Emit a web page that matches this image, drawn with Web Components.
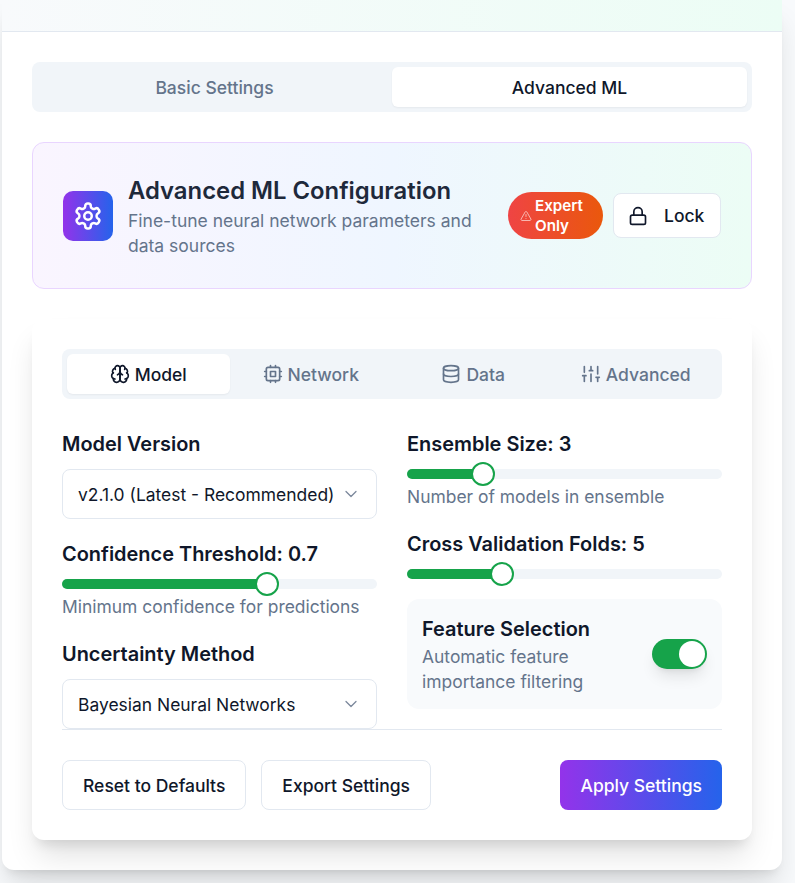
<!DOCTYPE html>
<html lang="en"><head><meta charset="utf-8"><title>Advanced ML</title>
<style>
html,body{margin:0;padding:0;height:883px;overflow:hidden;background:#f8fafc}
body{font-family:Inter,"Liberation Sans",sans-serif;color:#0f172a}
</style></head><body>
<ml-panel>
  <seg-tabs columns="2" height="40" slot="tabs">
    <seg-tab>Basic Settings</seg-tab>
    <seg-tab active>Advanced ML</seg-tab>
  </seg-tabs>
  <ml-banner slot="banner"></ml-banner>
  <ml-card slot="card">
    <seg-tabs columns="4" height="40" slot="tabs">
      <seg-tab active icon="brain">Model</seg-tab>
      <seg-tab icon="cpu">Network</seg-tab>
      <seg-tab icon="database">Data</seg-tab>
      <seg-tab icon="sliders">Advanced</seg-tab>
    </seg-tabs>
    <form-field slot="left" label="Model Version"><select-box>v2.1.0 (Latest - Recommended)</select-box></form-field>
    <form-field slot="left" label="Confidence Threshold: 0.7"><range-slider pct="65"></range-slider><help-text>Minimum confidence for predictions</help-text></form-field>
    <form-field slot="left" label="Uncertainty Method"><select-box>Bayesian Neural Networks</select-box></form-field>
    <form-field slot="right" label="Ensemble Size: 3"><range-slider pct="24.1"></range-slider><help-text>Number of models in ensemble</help-text></form-field>
    <form-field slot="right" label="Cross Validation Folds: 5"><range-slider pct="30"></range-slider></form-field>
    <toggle-row slot="right" title="Feature Selection">Automatic feature importance filtering</toggle-row>
    <action-button slot="actions">Reset to Defaults</action-button>
    <action-button slot="actions">Export Settings</action-button>
    <action-button slot="primary" primary>Apply Settings</action-button>
  </ml-card>
</ml-panel>
<script>
const ICONS={
settings:'<path d="M12.22 2h-.44a2 2 0 0 0-2 2v.18a2 2 0 0 1-1 1.73l-.43.25a2 2 0 0 1-2 0l-.15-.08a2 2 0 0 0-2.73.73l-.22.38a2 2 0 0 0 .73 2.73l.15.1a2 2 0 0 1 1 1.72v.51a2 2 0 0 1-1 1.74l-.15.09a2 2 0 0 0-.73 2.73l.22.38a2 2 0 0 0 2.73.73l.15-.08a2 2 0 0 1 2 0l.43.25a2 2 0 0 1 1 1.73V20a2 2 0 0 0 2 2h.44a2 2 0 0 0 2-2v-.18a2 2 0 0 1 1-1.73l.43-.25a2 2 0 0 1 2 0l.15.08a2 2 0 0 0 2.73-.73l.22-.39a2 2 0 0 0-.73-2.73l-.15-.08a2 2 0 0 1-1-1.74v-.5a2 2 0 0 1 1-1.74l.15-.09a2 2 0 0 0 .73-2.73l-.22-.38a2 2 0 0 0-2.73-.73l-.15.08a2 2 0 0 1-2 0l-.43-.25a2 2 0 0 1-1-1.73V4a2 2 0 0 0-2-2z"/><circle cx="12" cy="12" r="3"/>',
lock:'<rect x="3" y="11" width="18" height="11" rx="2"/><path d="M7 11V7a5 5 0 0 1 10 0v4"/>',
brain:'<path d="M12 5a3 3 0 1 0-5.997.125 4 4 0 0 0-2.526 5.77 4 4 0 0 0 .556 6.588A4 4 0 1 0 12 18Z"/><path d="M12 5a3 3 0 1 1 5.997.125 4 4 0 0 1 2.526 5.77 4 4 0 0 1-.556 6.588A4 4 0 1 1 12 18Z"/><path d="M15 13a4.5 4.5 0 0 1-3-4 4.5 4.5 0 0 1-3 4"/><path d="M17.599 6.5a3 3 0 0 0 .399-1.375"/><path d="M6.003 5.125A3 3 0 0 0 6.401 6.5"/><path d="M3.477 10.896a4 4 0 0 1 .585-.396"/><path d="M19.938 10.5a4 4 0 0 1 .585.396"/><path d="M6 18a4 4 0 0 1-1.967-.516"/><path d="M19.967 17.484A4 4 0 0 1 18 18"/>',
cpu:'<rect x="4" y="4" width="16" height="16" rx="2"/><rect x="9" y="9" width="6" height="6"/><path d="M15 2v2M15 20v2M2 15h2M2 9h2M20 15h2M20 9h2M9 2v2M9 20v2"/>',
database:'<ellipse cx="12" cy="5" rx="9" ry="3"/><path d="M3 5V19A9 3 0 0 0 21 19V5"/><path d="M3 12A9 3 0 0 0 21 12"/>',
sliders:'<path d="M4 21v-7M4 10V3M12 21v-9M12 8V3M20 21v-5M20 12V3M2 14h4M10 8h4M18 16h4"/>',
alert:'<path d="m21.73 18-8-14a2 2 0 0 0-3.48 0l-8 14A2 2 0 0 0 4 21h16a2 2 0 0 0 1.73-3"/><path d="M12 9v4"/><path d="M12 17h.01"/>',
chevron:'<path d="m6 9 6 6 6-6"/>'
};
const svg=(n,s,w=2)=>`<svg xmlns="http://www.w3.org/2000/svg" width="${s}" height="${s}" viewBox="0 0 24 24" fill="none" stroke="currentColor" stroke-width="${w}" stroke-linecap="round" stroke-linejoin="round" style="display:block;flex:none">${ICONS[n]}</svg>`;
class Base extends HTMLElement{
  constructor(){super();this.attachShadow({mode:'open'})}
  connectedCallback(){this.shadowRoot.innerHTML=this.render()}
}
const def=(name,render)=>customElements.define(name,class extends Base{render(){return render(this)}});

def('ml-panel',()=>`<style>
:host{display:block;width:780px;height:870px;margin-left:2px;background:#fff;border-radius:0 0 12px 12px;box-shadow:0 20px 30px -5px rgba(0,0,0,.13),0 8px 10px -6px rgba(0,0,0,.1)}
.head{height:31px;border-bottom:1px solid #e2e8f0;background:linear-gradient(90deg,#f8fafc,#ecfdf5)}
.body{padding:30px;display:flex;flex-direction:column;gap:30px}
</style><div class="head"></div><div class="body"><slot name="tabs"></slot><slot name="banner"></slot><slot name="card"></slot></div>`);

def('seg-tabs',h=>`<style>
:host{display:grid;grid-template-columns:repeat(${h.getAttribute('columns')},1fr);padding:5px;background:#f1f5f9;border-radius:8px}
</style><slot></slot>`);

def('seg-tab',h=>`<style>
:host{display:flex;align-items:center;justify-content:center;gap:5px;height:40px;border-radius:6px;font-size:17.5px;font-weight:500;line-height:24px;color:${h.hasAttribute('active')?'#0f172a':'#64748b'};${h.hasAttribute('active')?'background:#fff;box-shadow:0 1px 2px rgba(0,0,0,.05);':''}}
span{padding-top:2px}
</style>${h.getAttribute('icon')?svg(h.getAttribute('icon'),20):''}<span><slot></slot></span>`);

def('ml-banner',()=>`<style>
:host{display:flex;align-items:center;gap:20px;box-sizing:border-box;height:147px;padding:30px;border:1px solid #e9d5ff;border-radius:12px;background:linear-gradient(90deg,#faf5ff,#eff6ff 50%,#ecfdf5)}
.left{flex:1;min-width:0;display:flex;align-items:center;gap:15px}
.logo{flex:none;width:50px;height:50px;border-radius:10px;background:linear-gradient(90deg,#9333ea,#2563eb);color:#fff;display:flex;align-items:center;justify-content:center}
h2{margin:0;font-size:23.85px;line-height:35px;font-weight:600;color:#1e293b}
p{margin:0;font-size:17.5px;line-height:25px;color:#64748b}
.right{flex:none;display:flex;align-items:center;gap:10px}
.badge{box-sizing:border-box;width:95px;height:47px;padding:0 12px;display:flex;align-items:center;gap:3px;border-radius:24px;background:linear-gradient(90deg,#ef4444,#ea580c);color:#fff;font-size:15.2px;line-height:20px;font-weight:600}
.badge svg{opacity:.6}
.lock{box-sizing:border-box;width:108px;height:45px;padding:0 0 0 14px;display:flex;align-items:center;gap:16px;border:1px solid #e2e8f0;border-radius:8px;background:#fff;font-size:17.5px;font-weight:500;color:#0f172a}
</style><div class="left"><div class="logo">${svg('settings',30)}</div><div><h2>Advanced ML Configuration</h2><p>Fine-tune neural network parameters and data sources</p></div></div>
<div class="right"><div class="badge">${svg('alert',12)}<span>Expert Only</span></div><div class="lock">${svg('lock',20)}<span>Lock</span></div></div>`);

def('ml-card',()=>`<style>
:host{display:block;padding:30px;background:#fff;border-radius:12px;box-shadow:0 20px 30px -5px rgba(0,0,0,.12),0 10px 12px -6px rgba(0,0,0,.1)}
.grid{display:grid;grid-template-columns:315px 315px;gap:30px;margin-top:30px;height:300px}
.col{display:flex;flex-direction:column;gap:20px}
.foot{display:flex;justify-content:space-between;border-top:1px solid #e2e8f0;padding-top:30px}
.acts{display:flex;gap:15px}
</style><slot name="tabs"></slot><div class="grid"><div class="col"><slot name="left"></slot></div><div class="col"><slot name="right"></slot></div></div>
<div class="foot"><div class="acts"><slot name="actions"></slot></div><slot name="primary"></slot></div>`);

def('form-field',h=>`<style>
:host{display:block}
.l{font-size:19.95px;line-height:30px;font-weight:600;color:#0f172a;margin-bottom:10px}
</style><div class="l">${h.getAttribute('label')}</div><slot></slot>`);

def('select-box',()=>`<style>
:host{box-sizing:border-box;display:flex;align-items:center;justify-content:space-between;height:50px;padding:0 15px;border:1px solid #e2e8f0;border-radius:8px;background:#fff;font-size:17.45px;color:#0f172a}
.c{color:#64748b;opacity:.85}
</style><slot></slot><span class="c">${svg('chevron',20,1.5)}</span>`);

def('range-slider',h=>`<style>
:host{display:block;position:relative;height:10px;border-radius:5px;background:#f1f5f9}
.f{height:100%;border-radius:5px;background:#16a34a;width:${h.getAttribute('pct')}%}
.t{position:absolute;top:50%;left:${h.getAttribute('pct')}%;box-sizing:border-box;width:24px;height:24px;margin:-12px 0 0 -12px;border-radius:50%;border:2px solid #16a34a;background:#fff}
</style><div class="f"></div><div class="t"></div>`);

def('help-text',()=>`<style>
:host{display:block;margin-top:5px;font-size:17.45px;line-height:25px;color:#64748b}
</style><slot></slot>`);

def('toggle-row',h=>`<style>
:host{box-sizing:border-box;display:flex;align-items:center;justify-content:space-between;gap:15px;height:110px;padding:15px;border-radius:12px;background:#f8fafc}
.t{font-size:19.95px;line-height:30px;font-weight:600;color:#0f172a}
.d{font-size:17.45px;line-height:25px;color:#64748b}
.sw{flex:none;position:relative;width:55px;height:30px;border-radius:15px;background:#16a34a;box-shadow:0 10px 15px -3px rgba(0,0,0,.1),0 4px 6px -4px rgba(0,0,0,.1)}
.k{position:absolute;right:2px;top:2px;width:26px;height:26px;border-radius:50%;background:#fff}
</style><div><div class="t">${h.getAttribute('title')}</div><div class="d"><slot></slot></div></div><div class="sw"><div class="k"></div></div>`);

def('action-button',h=>`<style>
:host{box-sizing:border-box;display:flex;align-items:center;height:50px;padding:0 20px;border-radius:8px;font-size:17.5px;font-weight:500;${h.hasAttribute('primary')?'color:#fff;background:linear-gradient(90deg,#9333ea,#2563eb);':'color:#0f172a;background:#fff;border:1px solid #e2e8f0;'}}
</style><slot></slot>`);
</script>
</body></html>
